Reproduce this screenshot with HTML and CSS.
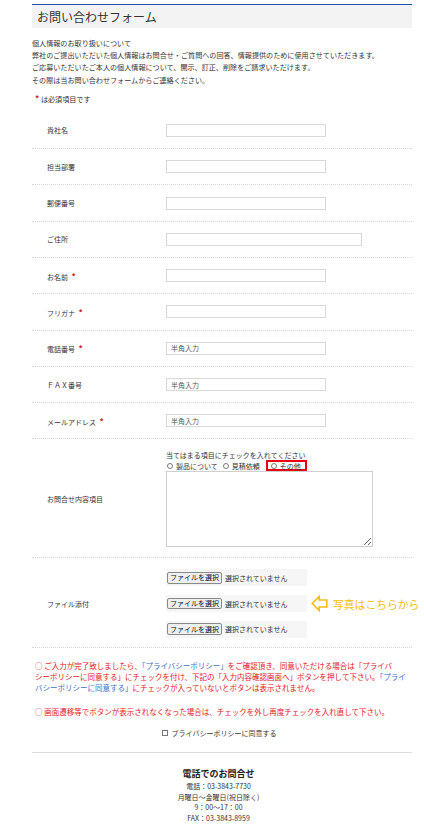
FILE: index.html
```html
<!DOCTYPE html>
<html lang="ja">

<head>
    <meta charset="UTF-8">
    <meta name="viewport" content="width=device-width, initial-scale=1.0">
    <title>お問い合わせフォーム</title>
    <link rel="stylesheet" href="styles.css">
</head>

<body>
    <div class="wrap">
        <h1 class="page-title">お問い合わせフォーム</h1>

        <p class="intro">
            個人情報のお取り扱いについて<br>
            弊社のご提出いただいた個人情報はお問合せ・ご質問への回答、情報提供のために使用させていただきます。<br>
            ご応募いただいたご本人の個人情報について、開示、訂正、削除をご請求いただけます。<br>
            その際は当お問い合わせフォームからご連絡ください。
        </p>

        <p class="req-note"><span class="req">*</span> は必須項目です</p>

        <form class="contact" id="contactForm">
            <div class="row">
                <label class="label">貴社名</label>
                <div class="field"><input type="text" class="txt"></div>
            </div>
            <div class="row">
                <label class="label">担当部署</label>
                <div class="field"><input type="text" class="txt"></div>
            </div>
            <div class="row">
                <label class="label">郵便番号</label>
                <div class="field"><input type="text" class="txt"></div>
            </div>
            <div class="row">
                <label class="label">ご住所</label>
                <div class="field"><input type="text" class="txt txt-wide"></div>
            </div>
            <div class="row">
                <label class="label">お名前 <span class="req">*</span></label>
                <div class="field"><input type="text" class="txt"></div>
            </div>
            <div class="row">
                <label class="label">フリガナ <span class="req">*</span></label>
                <div class="field"><input type="text" class="txt"></div>
            </div>
            <div class="row">
                <label class="label">電話番号 <span class="req">*</span></label>
                <div class="field"><input type="text" class="txt" placeholder="半角入力"></div>
            </div>
            <div class="row">
                <label class="label">ＦＡＸ番号</label>
                <div class="field"><input type="text" class="txt" placeholder="半角入力"></div>
            </div>
            <div class="row">
                <label class="label">メールアドレス <span class="req">*</span></label>
                <div class="field"><input type="text" class="txt" placeholder="半角入力"></div>
            </div>

            <div class="row row-inquiry">
                <label class="label">お問合せ内容項目</label>
                <div class="field">
                    <div class="hint">当てはまる項目にチェックを入れてください</div>
                    <div class="radios">
                        <label class="radio"><input type="radio" name="kind"> 製品について</label>
                        <label class="radio"><input type="radio" name="kind"> 見積依頼</label>
                        <label class="radio radio-mark"><input type="radio" name="kind"> その他</label>
                    </div>
                    <textarea class="message"></textarea>
                </div>
            </div>

            <div class="row row-files">
                <label class="label">ファイル添付</label>
                <div class="field field-files">
                    <div class="files">
                        <div class="file"><button type="button" class="file-btn">ファイルを選択</button><span class="file-name">選択されていません</span></div>
                        <div class="file"><button type="button" class="file-btn">ファイルを選択</button><span class="file-name">選択されていません</span></div>
                        <div class="file"><button type="button" class="file-btn">ファイルを選択</button><span class="file-name">選択されていません</span></div>
                    </div>
                    <div class="photo-note">
                        <svg class="arrow" width="17" height="17" viewBox="0 0 17 17">
                            <polygon points="1.2,8.5 8.2,1.5 8.2,5 15.8,5 15.8,12 8.2,12 8.2,15.5" fill="none" stroke="#f5bd12" stroke-width="1.6" stroke-linejoin="miter" />
                        </svg>
                        <span>写真はこちらから</span>
                    </div>
                </div>
            </div>
        </form>

        <div class="notice">
            <p>○ ご入力が完了致しましたら、<span class="link">「プライバシーポリシー」</span>をご確認頂き、同意いただける場合は「プライバ<br>シーポリシーに同意する」にチェックを付け、下記の「入力内容確認画面へ」ボタンを押して下さい。<span class="link">「プライ<br>バシーポリシーに同意する」</span>にチェックが入っていないとボタンは表示されません。</p>
            <p>○ 画面遷移等でボタンが表示されなくなった場合は、チェックを外し再度チェックを入れ直して下さい。</p>
        </div>

        <div class="agree">
            <label><input type="checkbox" class="check"> プライバシーポリシーに同意する</label>
        </div>

        <div class="tel-info">
            <h2>電話でのお問合せ</h2>
            <p>電話：03-3843-7730<br>月曜日～金曜日(祝日除く)<br>9：00～17：00<br>FAX：03-3843-8959</p>
        </div>
    </div>
</body>

</html>
```

FILE: styles.css
```css
body {
    margin: 0;
    font-family: "Noto Sans CJK JP", "Noto Sans", sans-serif;
    font-size: 7.1px;
    color: #333;
    background: #fff;
}

.wrap {
    margin-left: 32px;
    width: 380px;
}

.page-title {
    margin: 4px 0 0;
    height: 23px;
    line-height: 23px;
    padding-left: 5px;
    border-top: 1px solid #1d4fa6;
    background: #f3f3f3;
    font-size: 12px;
    font-weight: normal;
    color: #333;
}

.intro {
    margin: 9px 0 0;
    line-height: 12.2px;
}

.req-note {
    margin: 6px 0 0 3px;
    line-height: 12px;
}

.req {
    margin-left: 2px;
    color: #c8161d;
    font-weight: bold;
    font-size: 8.5px;
}

.req-note .req {
    margin-left: 0;
}

.contact {
    margin-top: 8px;
}

.row {
    display: flex;
    align-items: center;
    min-height: 35.3px;
    border-bottom: 1px dotted #d6d6d6;
}

.label {
    width: 134px;
    flex-shrink: 0;
    padding-left: 15px;
    box-sizing: border-box;
    font-size: 7px;
}

.txt {
    display: block;
    width: 160px;
    height: 13px;
    box-sizing: border-box;
    margin: 0;
    padding: 0 4px;
    border: 1px solid #d8d8d8;
    border-radius: 0;
    font-family: inherit;
    font-size: 7px;
    color: #333;
}

.txt::placeholder {
    color: #555;
}

.txt-wide {
    width: 196px;
}

.row-inquiry {
    padding: 11px 0 10px;
}

.hint {
    line-height: 10px;
    font-size: 7px;
}

.radios {
    display: flex;
    align-items: center;
    height: 11px;
    font-size: 7px;
}

.radio {
    display: inline-flex;
    align-items: center;
    margin-right: 4px;
}

.radio input,
.check {
    appearance: none;
    -webkit-appearance: none;
    margin: 0 3px 0 1px;
    width: 6px;
    height: 6px;
    border: 1px solid #777;
    box-sizing: border-box;
    background: #fff;
}

.radio input {
    border-radius: 50%;
}

.radio-mark {
    height: 7px;
    padding: 0 4px 0 2px;
    margin-right: 0;
    margin-left: 2px;
    border: 2px solid #e60012;
}

.message {
    display: block;
    width: 207px;
    height: 76px;
    box-sizing: border-box;
    margin: 0;
    border: 1px solid #cfcfcf;
    font-family: inherit;
}

.row-files {
    padding: 11px 0 9px;
}

.field-files {
    display: flex;
    align-items: center;
}

.files {
    display: flex;
    flex-direction: column;
    gap: 9px;
}

.file {
    display: flex;
    align-items: center;
    width: 141px;
    height: 16.7px;
    background: #f6f6f6;
}

.file-btn {
    height: 11.5px;
    width: 55px;
    margin: 0 3px 0 1px;
    padding: 0;
    border: 1px solid #8a8a8a;
    border-radius: 2px;
    background: #efefef;
    font-family: inherit;
    font-size: 7px;
    line-height: 9px;
    color: #111;
}

.file-name {
    font-size: 7px;
    color: #333;
}

.photo-note {
    display: flex;
    align-items: center;
    margin-left: 4px;
    white-space: nowrap;
    font-size: 10.8px;
    color: #f5bd12;
}

.arrow {
    flex-shrink: 0;
    margin-right: 5px;
}

.notice {
    padding: 12px 0 0 3px;
    color: #e4161b;
    font-size: 7.5px;
}

.notice p {
    margin: 0 0 13px;
    line-height: 11px;
}

.notice p:last-child {
    margin-bottom: 0;
}

.link {
    color: #3a70c4;
}

.agree {
    margin-top: 11px;
    padding-right: 7px;
    line-height: 11px;
    text-align: center;
    font-size: 7px;
}

.agree label {
    display: inline-flex;
    align-items: center;
}

.check {
    margin-right: 4px;
}

.tel-info {
    margin-top: 13px;
    padding-top: 15px;
    padding-right: 7px;
    border-top: 1px solid #dcdcdc;
    text-align: center;
}

.tel-info h2 {
    margin: 0;
    font-size: 9px;
    line-height: 12px;
    color: #222;
}

.tel-info p {
    margin: 1px 0 0;
    font-size: 7px;
    line-height: 10.6px;
}
```
